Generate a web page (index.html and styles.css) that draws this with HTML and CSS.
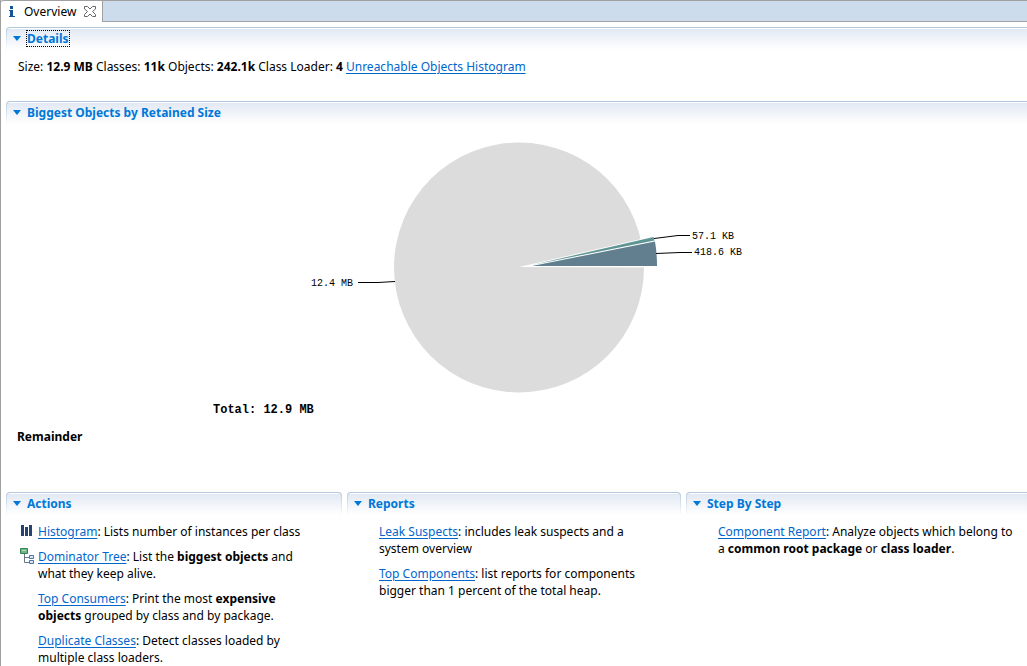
FILE: index.html
```html
<!DOCTYPE html>
<html lang="en">
<head>
<meta charset="utf-8">
<title>Overview</title>
<link rel="stylesheet" href="styles.css">
</head>
<body>
<div class="editor">
  <nav class="tabs">
    <div class="tab">
      <svg class="tab-info" viewBox="0 0 6 12" aria-hidden="true"><path fill="#15539e" d="M1 0h3v3H1zM0 4h4v6h2v1H0v-1h1V5H0z"/></svg>
      <span class="tab-name">Overview</span>
      <button class="tab-close" type="button" aria-label="Close">
        <svg viewBox="0 0 12 12" aria-hidden="true"><path fill="#fff" stroke="#666" d="M.5.5h3L6 3 8.500.5h3v2.500L8.500 5.500 11.500 8.500v2h-3L6 8l-2.500 2.500h-3v-2l3-3-3-2.500z"/></svg>
      </button>
    </div>
    <div class="tab-rest"></div>
  </nav>

  <main class="page">
    <section class="section wide details">
      <h2 class="head"><button class="toggle" type="button"><i class="arrow"></i><span class="focused">Details</span></button></h2>
      <p class="summary">Size: <b>12.9 MB</b> Classes: <b>11k</b> Objects: <b>242.1k</b> Class Loader: <b>4</b> <a href="#">Unreachable Objects Histogram</a></p>
    </section>

    <section class="section wide biggest">
      <h2 class="head"><button class="toggle" type="button"><i class="arrow"></i><span>Biggest Objects by Retained Size</span></button></h2>
      <svg class="chart" viewBox="211 125 611 295" role="img" aria-label="Biggest objects by retained size">
        <circle cx="519" cy="267.500" r="125" fill="#dcdcdc"/>
        <path fill="#fff" d="M519 267 641 239 650 237V267.500z"/>
        <path fill="#5f9594" d="M532 265 653.500 237 654.500 240.500z"/>
        <path fill="#617f8f" d="M532 266 655 241.500Q657 253 657 266z"/>
        <g class="leader">
          <path d="M654 238.500 678 235.500H690"/>
          <path d="M656 253.500 680 252.500H692"/>
          <path d="M358 282.500H378L395 281.500"/>
        </g>
        <text class="label" x="692" y="239">57.1 KB</text>
        <text class="label" x="694" y="255">418.6 KB</text>
        <text class="label" x="311" y="286">12.4 MB</text>
        <text class="total" x="213" y="413">Total: 12.9 MB</text>
      </svg>
      <p class="remainder"><b>Remainder</b></p>
    </section>

    <div class="columns">
      <section class="section">
        <h2 class="head"><button class="toggle" type="button"><i class="arrow"></i><span>Actions</span></button></h2>
        <ul class="items">
          <li><svg class="icon" viewBox="0 0 16 16" aria-hidden="true"><path fill="#27436f" d="M1 2h3v11H1zM5 4h3v9H5zM9 2h3v11H9z"/></svg><a href="#">Histogram</a>: Lists number of instances per class</li>
          <li><svg class="icon" viewBox="0 0 16 16" aria-hidden="true"><path fill="none" stroke="#687886" d="M4.500 6v8.500H9M4.500 9.500H9"/><path fill="#72b580" stroke="#32845a" d="M.5.5h7v5h-7z"/><path fill="#b9dfb9" d="M2 2h4v1H2z"/><path fill="#dbe7f7" stroke="#4976ad" d="M9.500 7.500h4v3h-4zM9.500 12.500h4v3h-4z"/></svg><a href="#">Dominator Tree</a>: List the <b>biggest objects</b> and what they keep alive.</li>
          <li><a href="#">Top Consumers</a>: Print the most <b>expensive objects</b> grouped by class and by package.</li>
          <li><a href="#">Duplicate Classes</a>: Detect classes loaded by multiple class loaders.</li>
        </ul>
      </section>
      <section class="section">
        <h2 class="head"><button class="toggle" type="button"><i class="arrow"></i><span>Reports</span></button></h2>
        <ul class="items">
          <li><a href="#">Leak Suspects</a>: includes leak suspects and a system overview</li>
          <li><a href="#">Top Components</a>: list reports for components bigger than 1 percent of the total heap.</li>
        </ul>
      </section>
      <section class="section wide">
        <h2 class="head"><button class="toggle" type="button"><i class="arrow"></i><span>Step By Step</span></button></h2>
        <ul class="items">
          <li><a href="#">Component Report</a>: Analyze objects which belong to a <b>common root package</b> or <b>class loader</b>.</li>
        </ul>
      </section>
    </div>
  </main>
</div>
</body>
</html>
```
FILE: styles.css
```css
* { box-sizing: border-box; }
html, body { margin: 0; height: 100%; overflow: hidden; }
body {
  background: #fff;
  color: #000;
  font: 12px/17px "Noto Sans", sans-serif;
}
b { font-weight: 700; }
h2, p, ul { margin: 0; padding: 0; }
a { color: #0066cc; text-decoration: underline; text-underline-offset: 2px; }
button { border: 0; padding: 0; background: none; font: inherit; color: inherit; }

.editor { min-height: 100%; border-left: 1px solid #a0a0a0; }

.tabs { display: flex; height: 22px; background: #cddcec; }
.tab {
  display: flex;
  align-items: center;
  padding: 0 6px 0 8px;
  background: #fff;
  border-top: 1px solid #a0a0a0;
  border-right: 1px solid #a0a0a0;
  border-top-left-radius: 3px;
}
.tab-rest { flex: 1; border-top: 1px solid #a0a0a0; border-bottom: 1px solid #a0a0a0; }
.tab-info { width: 6px; height: 12px; }
.tab-name { margin: 0 8px 0 9px; }
.tab-close { display: flex; }
.tab-close svg { width: 12px; height: 12px; }

.page { padding: 5px 0 0 5px; }

.head {
  height: 24px;
  padding-left: 5px;
  border: 1px solid transparent;
  border-top-color: #b4c8dc;
  border-radius: 4px 4px 0 0;
  background:
    linear-gradient(#fff, #fff) 0 0 / 100% 1px no-repeat padding-box,
    linear-gradient(#e1e8f3, #fff) padding-box,
    linear-gradient(#b4c8dc, #fff) border-box;
  font: 700 12px/17px "Noto Sans", sans-serif;
  color: #0078d7;
}
.wide .head { border-right: 0; border-top-right-radius: 0; }
.toggle { display: flex; align-items: center; gap: 5px; height: 21px; }
.arrow {
  width: 10px;
  height: 5px;
  background: #0078d7;
  clip-path: polygon(10% 0, 90% 0, 50% 100%);
}
.focused { outline: 1px dotted #000; line-height: 15px; }

.details { height: 74px; }
.summary { padding: 7px 0 0 12px; }
.chart { display: block; width: 611px; max-width: 100%; margin: 0 auto; }
.leader { fill: none; stroke: #000; }
.label { font: 10px "Liberation Mono", monospace; }
.total { font: bold 12px "Liberation Mono", monospace; }
.remainder { padding: 8px 0 0 11px; margin-bottom: 47px; }

.columns { display: grid; grid-template-columns: 336fr 334fr 341fr; gap: 5px; }
.items { padding: 7px 27px 0 32px; list-style: none; }
.wide .items { padding-right: 8px; }
.items li { position: relative; margin-bottom: 8px; }
.icon { position: absolute; left: -18px; top: 0; width: 16px; height: 16px; }
```
